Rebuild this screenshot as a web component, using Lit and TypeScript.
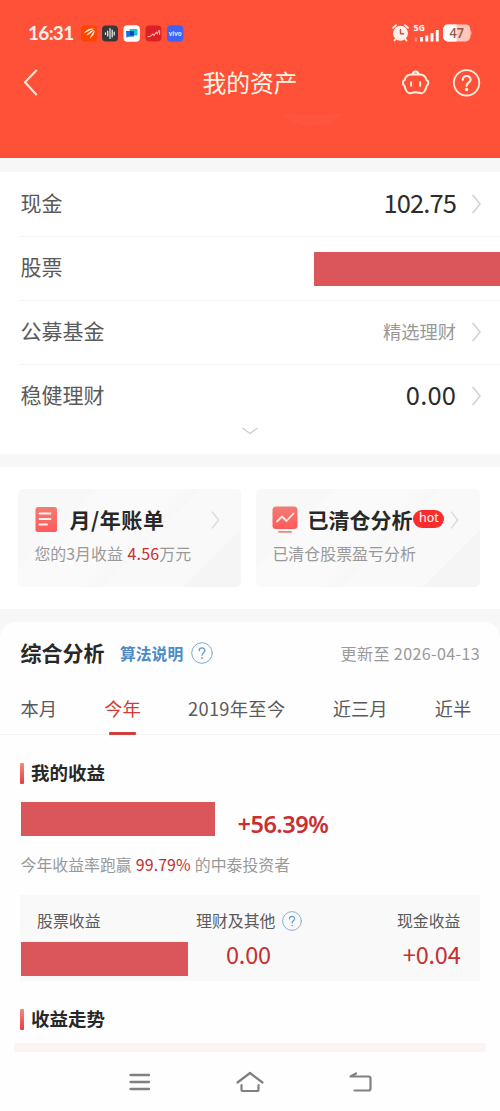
import { LitElement, html, css } from "lit";
import { customElement, property } from "lit/decorators.js";

@customElement("chevron-right")
class ChevronRight extends LitElement {
  static styles = css`
    :host { display: block; width: 9px; height: 20px; }
    svg { display: block; }
  `;
  render() {
    return html`<svg width="9" height="20" viewBox="0 0 9 20" fill="none" stroke="#cfcfcf" stroke-width="1.4">
      <path d="M.6 .8 8 10 .6 19.2" />
    </svg>`;
  }
}

@customElement("help-icon")
class HelpIcon extends LitElement {
  @property({ type: Number }) size = 22;
  static styles = css`
    :host { display: block; flex: none; }
    svg { display: block; }
  `;
  render() {
    return html`<svg width=${this.size} height=${this.size} viewBox="0 0 22 22" fill="none" stroke-linecap="round">
      <circle cx="11" cy="11" r="10.3" stroke="#7fa9cf" stroke-width="1" />
      <path d="M8.2 8.7c0-3.7 5.7-3.6 5.7-.2 0 2.2-2.8 2.3-2.8 4.7" stroke="#5f9bd0" stroke-width="1.3" />
      <circle cx="11.1" cy="16" r=".9" fill="#5f9bd0" />
    </svg>`;
  }
}

@customElement("status-bar")
class StatusBar extends LitElement {
  static styles = css`
    :host { display: flex; align-items: center; height: 34px; padding: 16px 28px 0 28px; color: #fff0ec; }
    .time { width: 53px; font: 700 19px/34px Lato, sans-serif; letter-spacing: -0.7px; white-space: nowrap; }
    svg { display: block; flex: none; }
    .space { flex: 1; }
    .vivo { font: 700 6.5px "Open Sans", sans-serif; }
    .gen { font: 700 8.5px "Open Sans", sans-serif; }
    .level { font: 600 13.5px "Open Sans", sans-serif; }
  `;
  render() {
    return html`
      <span class="time">16:31</span>
      <svg width="103" height="17" viewBox="0 0 103 17">
        <rect x="0" y=".5" width="16" height="16" rx="4" fill="#fa4600" />
        <path d="M2.8 8.2C6 4 9 3.1 13.2 3.5 9.8 5.2 6.8 6.4 2.8 8.2Z M5 10.4C7.5 7.5 10 5.3 13.4 4.4 11.5 6.8 8.8 9.2 5 10.4Z M8.8 13.2C9.8 10.2 11.8 7.8 13.5 5.2 14 8.4 12 11.2 8.8 13.2Z" fill="#fff4e6" />
        <rect x="21" y=".5" width="16" height="16" rx="4" fill="#38383b" />
        <path d="M24.5 7.8v1.6M26.7 6v5M29 3.5v10M31.2 5v7M33.2 7v3" stroke="#f2f2f2" stroke-width="1.2" stroke-linecap="round" />
        <rect x="42.5" y=".3" width="16.4" height="16.4" rx="4" fill="#fff" />
        <rect x="48.5" y="4" width="8" height="6.6" rx="1" fill="#18c4d5" />
        <path d="M45 6h8v5.4l-6 .3-1.5 1.3z" fill="#1174df" /><rect x="49" y="6" width="4" height="4.3" fill="#044aad" />
        <rect x="64.5" y=".5" width="16" height="16" rx="4" fill="#dc2027" />
        <path d="m66.500 11.700 3-.4 2.200-2.200 1.300 1.300 2.300-3.200 1 1.500 2-3.800M78.600 5v5" fill="none" stroke="#ffaaa3" stroke-width="1.1" />
        <rect x="86" y=".3" width="16.4" height="16.4" rx="4" fill="#3e63f4" />
        <text class="vivo" x="94.2" y="10.5" text-anchor="middle" textLength="13" lengthAdjust="spacingAndGlyphs" fill="#dce4ff">vivo</text>
      </svg>
      <span class="space"></span>
      <svg width="82" height="20" viewBox="0 0 82 20">
        <circle cx="10.5" cy="10.3" r="7.5" fill="#fff1ed" />
        <path d="m3 4.800 3-2.600M18 4.800l-3-2.600M4.500 17.500l1.500-2M16.500 17.500l-1.500-2" stroke="#fff1ed" stroke-width="1.8" stroke-linecap="round" />
        <path d="M10.500 6v4.800h3.600" fill="none" stroke="#d4523d" stroke-width="1.4" />
        <text class="gen" x="23.5" y="8.2" textLength="11.5" lengthAdjust="spacingAndGlyphs" fill="#fff">5G</text>
        <path d="M25.800 14.500v4" stroke="#ff9583" stroke-width="2" />
        <path d="M31.500 14v4.500M36.800 12.600v5.900M42 10v8.500M47.300 7v11.500" stroke="#fff" stroke-width="2.9" />
        <rect x="53.3" y="1.4" width="27" height="17" rx="4.5" fill="#ffc6bd" />
        <path d="M57.800 1.400H66.500v17h-8.700a4.500 4.500 0 0 1-4.500-4.500v-8a4.500 4.500 0 0 1 4.500-4.500Z" fill="#fff" />
        <path d="M80.300 7q2.500 3 0 6z" fill="#ffc6bd" />
        <text class="level" x="66.8" y="14.8" text-anchor="middle" textLength="14.5" lengthAdjust="spacingAndGlyphs" fill="#9c5144">47</text>
      </svg>`;
  }
}

@customElement("title-bar")
class TitleBar extends LitElement {
  static styles = css`
    :host { display: grid; grid-template-columns: 1fr auto 1fr; align-items: center; height: 66px; padding: 0 19px 0 23px; }
    h1 { margin: 0 0 2px -4px; font-size: 23.8px; line-height: 36px; font-weight: 400; color: #fff5e6; }
    svg { display: block; }
    .back { margin-bottom: 2px; }
    .actions { display: flex; justify-content: flex-end; align-items: center; gap: 23px; }
  `;
  render() {
    return html`
      <svg class="back" width="16" height="27" viewBox="0 0 16 27" fill="none" stroke="#fff0df" stroke-width="2"><path d="M13.700 1 2 13.200 13.700 26" /></svg>
      <h1>我的资产</h1>
      <div class="actions">
        <svg width="28" height="28" viewBox="0 0 28 28" fill="none" stroke="#fff0df" stroke-width="2" stroke-linecap="round" stroke-linejoin="round">
          <path d="M9.500 5.600h8.200c3.600 0 6 2.200 6.800 5.400 2.200.6 2.500 4.400.3 5.600-.9 4-2.900 7.600-5.700 7.600-1.900 0-2.700-.9-5.500-.9s-3.600.9-5.500.9c-2.800 0-4.800-3.600-5.700-7.600-2.200-1.200-1.900-5 .3-5.600.8-3.200 3.200-5.400 6.800-5.400Z" />
          <path d="M10.800 5.100c.5-3.500 5.100-3.500 5.600 0" />
          <path d="M9.100 13.200v3.600M18.200 13.200v3.600" stroke-width="1.900" />
        </svg>
        <svg width="28" height="28" viewBox="0 0 28 28" fill="none" stroke="#fff0df" stroke-width="1.8" stroke-linecap="round">
          <circle cx="13.600" cy="13.800" r="12.700" />
          <path d="M9.800 10.800c0-5 7.800-5 7.800-.2 0 3-4 3.200-4 6.200" stroke-width="2.200" />
          <circle cx="13.600" cy="20.500" r="1.700" fill="#fff0df" stroke="none" />
        </svg>
      </div>`;
  }
}

@customElement("asset-row")
class AssetRow extends LitElement {
  @property() label = "";
  @property() value = "";
  @property() kind = "number";
  static styles = css`
    :host { display: flex; align-items: center; box-sizing: border-box; height: 64px; margin-left: 20px; padding: 0 19px 1px 0.500px; border-bottom: 1px solid #f4f4f4; }
    :host([last]) { border-bottom-color: transparent; }
    .label { flex: 1; padding-bottom: 4px; font-size: 21px; line-height: 32px; color: #5a5a5a; }
    .number, .wide { margin-right: 16px; padding-bottom: 4px; font-size: 25.5px; line-height: 32px; letter-spacing: -0.9px; color: #2c2c2c; }
    .wide { letter-spacing: .15px; }
    .note { margin-right: 16px; padding-bottom: 3px; font-size: 18.3px; line-height: 32px; color: #999; }
    .mask { width: 186px; height: 34px; margin: 2px -19px 0 0; background: #da565a; }
  `;
  render() {
    return html`<span class="label">${this.label}</span>
      ${this.kind === "mask"
        ? html`<span class="mask"></span>`
        : html`<span class=${this.kind}>${this.value}</span><chevron-right></chevron-right>`}`;
  }
}

@customElement("feature-card")
class FeatureCard extends LitElement {
  @property() heading = "";
  @property() icon = "bill";
  @property({ type: Boolean }) hot = false;
  static styles = css`
    :host { display: block; box-sizing: border-box; height: 98px; padding: 15px 20px 0 16px; border-radius: 5px;
      background: linear-gradient(135deg, #f8f8f8 0 25%, #fafafa 25% 48%, #f7f7f7 57%, #f9f9f9 57% 82%, #f5f5f5 82%); }
    .top { display: flex; align-items: center; height: 32px; }
    svg { display: block; flex: none; width: 27px; height: 27px; margin: -2px 9px 0 -1px; }
    .heading { margin-top: -3px; font-size: 21px; line-height: 32px; font-weight: 700; color: #282828; white-space: nowrap; }
    .bill { letter-spacing: .6px; }
    .hot { width: 31px; height: 18px; margin: -3px 0 0 1px; border-radius: 9px; background: #fb2c2c; color: #fff; text-align: center; font: 12.5px/16px "Noto Sans", sans-serif; }
    .space { flex: 1; }
    chevron-right { opacity: .75; transform: translateX(-1px) scale(.9); }
    .detail { margin-top: 5px; font-size: 15.95px; line-height: 24px; color: #999; white-space: nowrap; }
  `;
  render() {
    return html`
      <div class="top">
        ${this.icon === "bill"
          ? html`<svg viewBox="0 0 27 27"><defs><linearGradient id="g" x2="0" y2="1"><stop stop-color="#f17c75" /><stop offset="1" stop-color="#ff5a5a" /></linearGradient></defs>
              <rect x="2.500" y="1" width="21.500" height="25" rx="2.500" fill="url(#g)" />
              <path d="M6.500 7.500h11M6.500 13h11M6.500 18.500h7.500" stroke="#fff1ee" stroke-width="1.800" stroke-linecap="round" /></svg>`
          : html`<svg viewBox="0 0 27 27"><defs><linearGradient id="g" x2="0" y2="1"><stop stop-color="#f17c75" /><stop offset="1" stop-color="#ff5a5a" /></linearGradient></defs>
              <rect x="1.500" y=".5" width="25" height="22.500" rx="3.500" fill="url(#g)" />
              <path d="M8 25.800h12" stroke="#ee8580" stroke-width="1.800" stroke-linecap="round" />
              <path d="m6 15.500 5-5 4.500 4.500 7-7.500" fill="none" stroke="#ffeceb" stroke-width="1.800" stroke-linecap="round" stroke-linejoin="round" /></svg>`}
        <span class="heading ${this.icon}">${this.heading}</span>
        ${this.hot ? html`<span class="hot">hot</span>` : ""}
        <span class="space"></span>
        <chevron-right></chevron-right>
      </div>
      <div class="detail"><slot></slot></div>`;
  }
}

@customElement("analysis-panel")
class AnalysisPanel extends LitElement {
  static styles = css`
    :host { display: block; height: 430px; overflow: hidden; border-radius: 16px 16px 0 0; background: #fefefe; }
    .head { display: flex; align-items: center; height: 62px; padding: 0 20px 0 20.500px; }
    .name { margin-top: -2px; font-size: 21px; line-height: 32px; font-weight: 700; color: #282828; }
    .link { margin: 2px 8px 0 15.500px; font-size: 15.8px; line-height: 24px; font-weight: 700; color: #4a8bc8; }
    .date { margin-left: auto; font-size: 16.1px; line-height: 24px; color: #999; letter-spacing: .35px; }
    .tabs { display: flex; height: 50px; padding: 0 0 0 20.500px; border-bottom: 1px solid #f5f5f5; font-size: 18.3px; line-height: 48px; color: #5a5a5a; white-space: nowrap; }
    .tab { margin-right: 47.200px; }
    .range { letter-spacing: .3px; }
    .active { display: flex; flex-direction: column; align-items: center; color: #d13a38; }
    .active::after { content: ""; flex: none; width: 27px; height: 3px; border-radius: 1px; background: #d2403d; }
    .section { display: flex; align-items: center; height: 32px; margin-left: 20px; font-size: 18.5px; line-height: 30px; font-weight: 700; color: #282828; }
    .section::before { content: ""; width: 4px; height: 21px; margin-right: 7px; border-radius: 1px; background: linear-gradient(#f48a7d, #e93c42); }
    .section span { padding-bottom: 2px; }
    .first { margin-top: 22px; }
    .gain { display: flex; height: 34px; margin: 13px 0 0 21px; }
    .mask { background: #da565a; }
    .big { width: 194px; height: 34px; }
    .percent { margin: 5px 0 0 22.500px; font: 600 23.5px/34px "Noto Sans", sans-serif; letter-spacing: -.5px; color: #c9302f; }
    .rank { margin: 17px 0 0 20.500px; font-size: 15.9px; line-height: 24px; color: #999; white-space: nowrap; }
    .red { margin: 0 .500px; color: #c4302f; letter-spacing: .1px; }
    .box { display: grid; grid-template-columns: 168px 122px 1fr; height: 86px; margin: 18px 20px 0; background: #f9f9f9; font-size: 15.9px; line-height: 24px; color: #5a5a5a; }
    .cell { padding-top: 14px; }
    .cell:first-child .title { padding-left: 17px; }
    .title { display: flex; align-items: center; gap: 7px; height: 24px; white-space: nowrap; }
    .middle .title { padding-left: 8px; }
    .small { width: 167px; height: 34px; margin: 9px 0 0 1px; }
    .amount { height: 34px; margin-top: 4px; font-size: 23.5px; line-height: 34px; letter-spacing: -.2px; color: #c4302f; }
    .middle .amount { padding-left: 38px; }
    .right { display: flex; flex-direction: column; align-items: flex-end; padding-right: 19.500px; }
    .second { margin-top: 22px; }
    .chart { height: 9px; margin: 8px 14px 0; border-radius: 3px 3px 0 0; background: #faf4f3; }
  `;
  render() {
    return html`
      <div class="head"><span class="name">综合分析</span><span class="link">算法说明</span><help-icon></help-icon><span class="date">更新至 2026-04-13</span></div>
      <div class="tabs">
        <span class="tab">本月</span><span class="tab active">今年</span><span class="tab range">2019年至今</span><span class="tab">近三月</span><span>近半</span>
      </div>
      <div class="section first"><span>我的收益</span></div>
      <div class="gain"><span class="mask big"></span><span class="percent">+56.39%</span></div>
      <div class="rank">今年收益率跑赢 <span class="red">99.79%</span> 的中泰投资者</div>
      <div class="box">
        <div class="cell"><div class="title">股票收益</div><div class="mask small"></div></div>
        <div class="cell middle"><div class="title">理财及其他 <help-icon size="20"></help-icon></div><div class="amount">0.00</div></div>
        <div class="cell right"><div class="title">现金收益</div><div class="amount">+0.04</div></div>
      </div>
      <div class="section second"><span>收益走势</span></div>
      <div class="chart"></div>`;
  }
}

@customElement("app-root")
class AppRoot extends LitElement {
  static styles = css`
    :host { display: block; width: 500px; height: 1111px; overflow: hidden; background: #f7f7f7; font-family: "Noto Sans CJK SC", sans-serif; }
    .hero { display: flow-root; height: 158px; background: #ff5038; }
    .swoosh { display: block; margin: -3px 0 0 281px; }
    .assets { box-sizing: border-box; height: 282px; margin-top: 14px; padding-top: 1px; background: #fff; }
    .more { display: block; margin: -2px auto 0; }
    .cards { display: grid; grid-template-columns: 223px 224px; gap: 15px; height: 120px; margin-top: 13px; padding: 22px 0 0 18.400px; background: #fff; }
    .money { color: #c4302f; margin-left: 1px; letter-spacing: .2px; }
    analysis-panel { margin-top: 13px; }
    .nav { display: flex; justify-content: center; align-items: center; gap: 85px; height: 59px; padding-left: 2px; background: #fefefe; }
    .nav svg { display: block; }
    .menu { margin-left: -2px; }
  `;
  render() {
    return html`
      <div class="hero"><status-bar></status-bar><title-bar></title-bar>
        <svg class="swoosh" width="68" height="14" viewBox="0 0 68 14"><path d="M0 0Q32 4 66 0 48 13 28 13 12 12 0 0Z" fill="#ff5942" opacity=".5" /></svg>
      </div>
      <div class="assets">
        <asset-row label="现金" value="102.75"></asset-row>
        <asset-row label="股票" kind="mask"></asset-row>
        <asset-row label="公募基金" value="精选理财" kind="note"></asset-row>
        <asset-row label="稳健理财" value="0.00" kind="wide" last></asset-row>
        <svg class="more" width="16" height="8" viewBox="0 0 16 8" fill="none" stroke="#ccc" stroke-width="1.300"><path d="m.5 1 7.500 5.500L15.500 1" /></svg>
      </div>
      <div class="cards">
        <feature-card heading="月/年账单">您的3月收益 <span class="money">4.56</span>万元</feature-card>
        <feature-card heading="已清仓分析" icon="chart" hot>已清仓股票盈亏分析</feature-card>
      </div>
      <analysis-panel></analysis-panel>
      <div class="nav">
        <svg class="menu" width="22" height="18" viewBox="0 0 22 18" stroke="#808080" stroke-width="2.300" stroke-linecap="round"><path d="M1.500 2h18.500M1.500 9h18.500M1.500 16h18.500" /></svg>
        <svg width="28" height="22" viewBox="0 0 28 22" fill="none" stroke="#808080" stroke-width="2.200" stroke-linecap="round" stroke-linejoin="round"><path d="M1.500 11.500 14 2l12.500 9.500M5.500 14v4.500c0 1 .5 1.500 1.500 1.500h14c1 0 1.500-.5 1.500-1.500V14" /></svg>
        <svg width="23" height="20" viewBox="0 0 23 20" fill="none" stroke="#808080" stroke-width="2.200" stroke-linecap="round" stroke-linejoin="round"><path d="M7 1.500 1.500 4.500H19.500Q21.500 4.500 21.500 6.500V16.500Q21.500 18.500 19.500 18.500H5.500" /></svg>
      </div>`;
  }
}
